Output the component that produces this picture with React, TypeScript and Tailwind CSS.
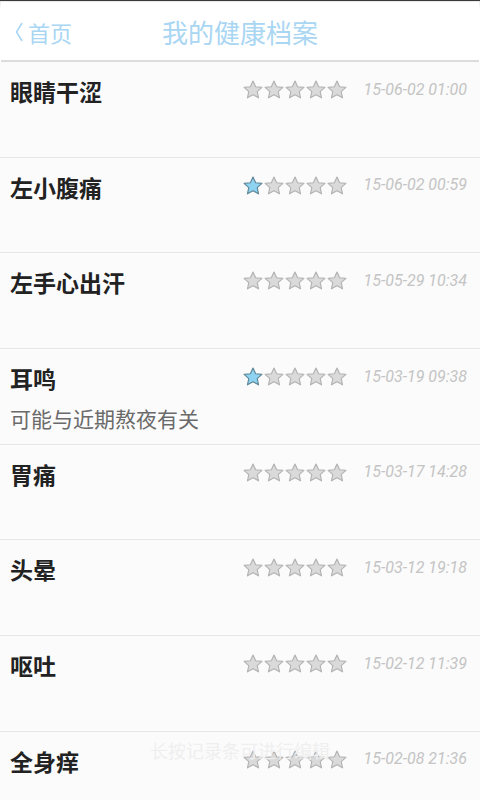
const records = [
  { title: '眼睛干涩', note: '', rating: 0, time: '15-06-02 01:00' },
  { title: '左小腹痛', note: '', rating: 1, time: '15-06-02 00:59' },
  { title: '左手心出汗', note: '', rating: 0, time: '15-05-29 10:34' },
  { title: '耳鸣', note: '可能与近期熬夜有关', rating: 1, time: '15-03-19 09:38' },
  { title: '胃痛', note: '', rating: 0, time: '15-03-17 14:28' },
  { title: '头晕', note: '', rating: 0, time: '15-03-12 19:18' },
  { title: '呕吐', note: '', rating: 0, time: '15-02-12 11:39' },
  { title: '全身痒', note: '', rating: 0, time: '15-02-08 21:36' },
];

const cjk = { fontFamily: '"Noto Sans CJK SC", "Noto Sans", sans-serif' };

function Star({ on }: { on: boolean }) {
  return (
    <svg width="20" height="19" viewBox="0 0 24 23">
      <path
        d="M12 1.2l3.2 7 7.6.8-5.7 5.1 1.6 7.5L12 17.8l-6.7 3.8 1.6-7.5L1.2 9l7.6-.8z"
        fill={on ? '#8fd3f2' : '#dadada'}
        stroke={on ? '#5f8797' : '#b3b3b3'}
        strokeWidth="1.4"
        strokeLinejoin="round"
      />
    </svg>
  );
}

function Header() {
  return (
    <div className="h-[62px] bg-gradient-to-b from-[#e8e8e8] to-white to-[14%] border-t border-[#3a3a3a]">
      <div className="relative h-[60px] mx-px mt-[1px] bg-white border-b-2 border-[#dcdcdc] flex items-center justify-center">
        <div className="absolute left-[13px] top-[15px] flex items-center text-[#a9d6f3]" style={cjk}>
          <svg width="10" height="22" viewBox="0 0 10 22" className="mr-[4px]">
            <path d="M8 2L2.5 11 8 20" fill="none" stroke="#a9d6f3" strokeWidth="1.6" />
          </svg>
          <span className="text-[22px] leading-[30px]">首页</span>
        </div>
        <span className="text-[26px] leading-[34px] text-[#a9d6f3] mt-[1px]" style={cjk}>
          我的健康档案
        </span>
      </div>
    </div>
  );
}

export default function App() {
  return (
    <div className="relative w-[480px] h-[800px] overflow-hidden bg-[#fbfbfb]">
      <Header />
      <div>
        {records.map((r) => (
          <div key={r.time} className="h-[95.7px] border-b border-[#e6e6e6] flex pl-[10px] pr-[13px]">
            <div className="flex-1 pt-[14px]">
              <div className="text-[23px] leading-[30px] font-bold text-[#222]" style={cjk}>
                {r.title}
              </div>
              {r.note && (
                <div className="mt-[11px] text-[21px] leading-[28px] text-[#6a6a6a]" style={cjk}>
                  {r.note}
                </div>
              )}
            </div>
            <div className="flex items-center h-[19px] mt-[18px]">
              <div className="flex gap-[1px]">
                {[1, 2, 3, 4, 5].map((s) => (
                  <Star key={s} on={s <= r.rating} />
                ))}
              </div>
              <span
                className="ml-[16px] text-[16px] italic text-[#c4c4c4]"
                style={{ fontFamily: 'Roboto, sans-serif' }}
              >
                {r.time}
              </span>
            </div>
          </div>
        ))}
      </div>
      <div className="absolute left-0 right-0 top-[737px] flex justify-center pointer-events-none">
        <span className="text-[18px] leading-[26px] text-[#efefef]" style={cjk}>
          长按记录条可进行编辑
        </span>
      </div>
    </div>
  );
}
